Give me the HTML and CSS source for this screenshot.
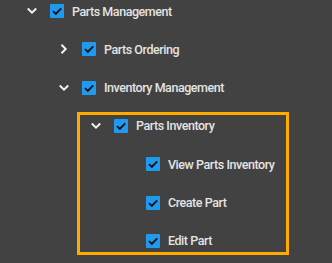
FILE: index.html
```html
<!DOCTYPE html>
<html>
<head>
<meta charset="utf-8">
<link rel="stylesheet" href="styles.css">
</head>
<body>
<div class="tree">
  <div class="row lvl0">
    <span class="toggle"><svg width="10" height="10" viewBox="0 0 10 10"><path d="M1.5 3.2 L5 6.7 L8.5 3.2" /></svg></span>
    <span class="cb"><svg width="14" height="14" viewBox="0 0 14 14"><path d="M3 7.2 L5.8 10 L11.2 4.4" /></svg></span>
    <span class="label">Parts Management</span>
  </div>
  <div class="row lvl1">
    <span class="toggle"><svg width="10" height="10" viewBox="0 0 10 10"><path d="M3.2 1.5 L6.7 5 L3.2 8.5" /></svg></span>
    <span class="cb"><svg width="14" height="14" viewBox="0 0 14 14"><path d="M3 7.2 L5.8 10 L11.2 4.4" /></svg></span>
    <span class="label">Parts Ordering</span>
  </div>
  <div class="row lvl1">
    <span class="toggle"><svg width="10" height="10" viewBox="0 0 10 10"><path d="M1.5 3.2 L5 6.7 L8.5 3.2" /></svg></span>
    <span class="cb"><svg width="14" height="14" viewBox="0 0 14 14"><path d="M3 7.2 L5.8 10 L11.2 4.4" /></svg></span>
    <span class="label">Inventory Management</span>
  </div>
  <div class="group">
    <div class="row lvl2">
      <span class="toggle"><svg width="10" height="10" viewBox="0 0 10 10"><path d="M1.5 3.2 L5 6.7 L8.5 3.2" /></svg></span>
      <span class="cb"><svg width="14" height="14" viewBox="0 0 14 14"><path d="M3 7.2 L5.8 10 L11.2 4.4" /></svg></span>
      <span class="label">Parts Inventory</span>
    </div>
    <div class="row lvl3">
      <span class="toggle"></span>
      <span class="cb"><svg width="14" height="14" viewBox="0 0 14 14"><path d="M3 7.2 L5.8 10 L11.2 4.4" /></svg></span>
      <span class="label">View Parts Inventory</span>
    </div>
    <div class="row lvl3">
      <span class="toggle"></span>
      <span class="cb"><svg width="14" height="14" viewBox="0 0 14 14"><path d="M3 7.2 L5.8 10 L11.2 4.4" /></svg></span>
      <span class="label">Create Part</span>
    </div>
    <div class="row lvl3">
      <span class="toggle"></span>
      <span class="cb"><svg width="14" height="14" viewBox="0 0 14 14"><path d="M3 7.2 L5.8 10 L11.2 4.4" /></svg></span>
      <span class="label">Edit Part</span>
    </div>
  </div>
</div>
</body>
</html>
```
FILE: styles.css
```css
html, body {
  margin: 0;
  padding: 0;
  background: #424242;
  overflow: hidden;
}
body {
  width: 332px;
  height: 263px;
  font-family: Roboto, "Liberation Sans", sans-serif;
  font-size: 12.5px;
  font-weight: 500;
  color: #e4e4e4;
}
.tree {
  margin-top: -8.17px;
  display: flex;
  flex-direction: column;
}
.group {
  display: flex;
  flex-direction: column;
  margin-left: 72px;
  width: 222px;
  outline: 3px solid #ffab00;
  outline-offset: -8px;
}
.row {
  display: flex;
  align-items: center;
  height: 38.33px;
  box-sizing: border-box;
}
.lvl0 { padding-left: 20px; }
.lvl1 { padding-left: 52px; }
.lvl2 { padding-left: 12px; }
.lvl3 { padding-left: 44px; }
.toggle {
  width: 24px;
  height: 14px;
  display: flex;
  align-items: center;
  justify-content: center;
  margin-right: 6px;
}
.toggle svg path {
  fill: none;
  stroke: #f2f2f2;
  stroke-width: 2;
  stroke-linecap: square;
}
.cb {
  width: 14px;
  height: 14px;
  background: #1e9bf0;
  border-radius: 1px;
  display: flex;
  margin-right: 8px;
}
.cb svg path {
  fill: none;
  stroke: #111;
  stroke-width: 1.9;
}
.label {
  white-space: nowrap;
  letter-spacing: -0.45px;
}
```
